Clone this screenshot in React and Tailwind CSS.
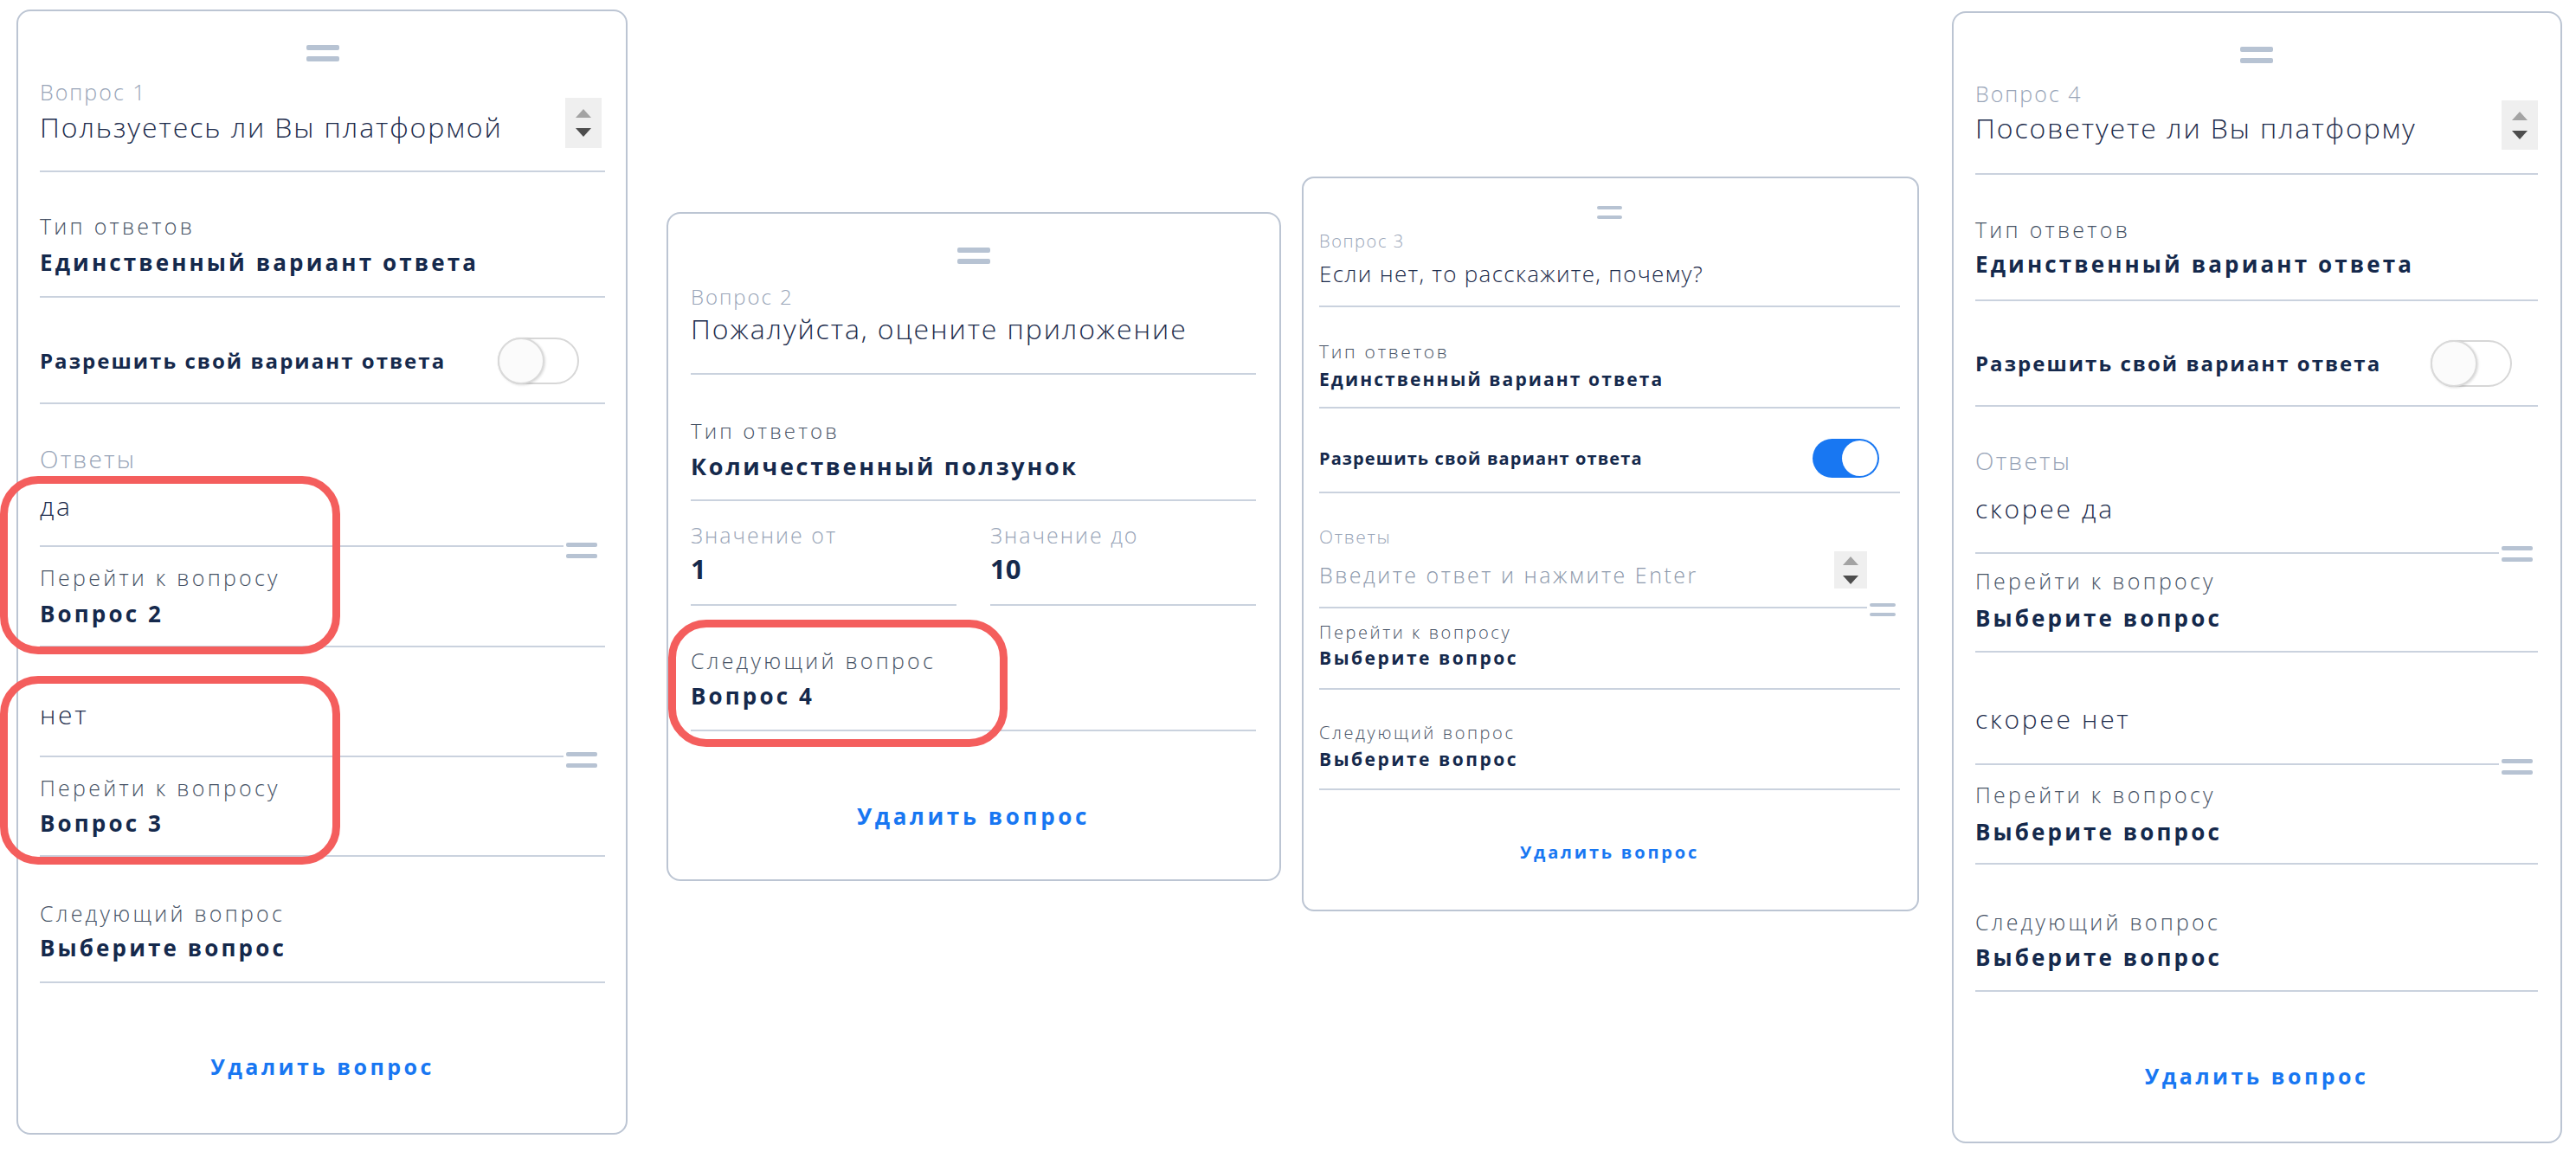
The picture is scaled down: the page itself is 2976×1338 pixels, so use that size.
import React from 'react';

/* ── small pieces ── */
function Handle({ className = '', w = 'w-[38px]', bar = 'h-[6px]', gap = 'mt-[7px]' }) {
  return (
    <div className={`${w} ${className}`}>
      <div className={`${bar} rounded-[2px] bg-[#b7c3d3]`} />
      <div className={`${bar} ${gap} rounded-[2px] bg-[#b7c3d3]`} />
    </div>
  );
}

function Line({ className = '' }) {
  return <div className={`h-[2px] bg-[#cad2de] ${className}`} />;
}

function Spinner({ className = '' }) {
  return (
    <div className={`bg-[#efefef] flex flex-col items-center justify-center gap-[12px] ${className}`}>
      <svg width="18" height="10" viewBox="0 0 18 10"><path d="M9 0 L18 10 L0 10 Z" fill="#a3a3a3" /></svg>
      <svg width="18" height="10" viewBox="0 0 18 10"><path d="M0 0 L18 0 L9 10 Z" fill="#4d4d4d" /></svg>
    </div>
  );
}

function ToggleOff({ className = '' }) {
  return (
    <div className={`relative w-[94px] h-[54px] rounded-full border-2 border-[#d7d7d7] bg-white ${className}`}>
      <div className="absolute left-[-2px] top-[-2px] w-[54px] h-[54px] rounded-full border-2 border-[#dadada] bg-[#fbfbfb] shadow-[1px_1px_3px_rgba(0,0,0,0.15)]" />
    </div>
  );
}

function ToggleOn({ className = '' }) {
  return (
    <div className={`relative w-[77px] h-[45px] rounded-full bg-[#1877f2] ${className}`}>
      <div className="absolute right-[2px] top-[2px] w-[41px] h-[41px] rounded-full bg-white" />
    </div>
  );
}

// text styles; the tracking makes up for the wider face of the original
const LIGHT = 'text-[#98a4b7] font-light tracking-[0.08em]';
const MID = 'text-[#475366] font-light tracking-[0.13em]';
const Q = 'text-[#1d2c4c] font-light tracking-[0.06em]';
const ANS = 'text-[#1d2c4c] font-light tracking-[0.09em]';
const VAL = 'text-[#15294c] font-bold tracking-[0.12em]';
const SW = 'font-bold text-[#15294c] tracking-[0.085em]';
const LINK = 'text-[#1877f2] font-bold tracking-[0.14em]';

function T({ c, children }) {
  return <div className={`leading-none whitespace-nowrap ${c}`}>{children}</div>;
}

/* ── cards ── */
function CardOne() {
  return (
    <div className="ml-[19px] mt-[11px] w-[706px] h-[1300px] shrink-0 rounded-[16px] border-2 border-[#bcc5d3] bg-white pl-[25px] pr-[24px]">
      <div className="flex justify-center"><Handle className="mt-[39px]" /></div>
      <div className="mt-[23px] flex items-start">
        <div className="flex-1">
          <T c={`text-[25px] ${LIGHT}`}>Вопрос 1</T>
          <T c={`mt-[12px] text-[32px] ${Q}`}>Пользуетесь ли Вы платформой</T>
        </div>
        <Spinner className="mt-[19px] mr-[4px] w-[42px] h-[58px]" />
      </div>
      <Line className="mt-[26px]" />
      <T c={`mt-[50px] text-[25px] ${MID}`}>Тип ответов</T>
      <T c={`mt-[16px] text-[26px] ${VAL}`}>Единственный вариант ответа</T>
      <Line className="mt-[26px]" />
      <div className="mt-[45px] h-[55px] flex items-center justify-between">
        <T c={`text-[24px] ${SW}`}>Разрешить свой вариант ответа</T>
        <ToggleOff className="mr-[30px]" />
      </div>
      <Line className="mt-[21px]" />
      <T c={`mt-[49px] text-[28px] ${LIGHT}`}>Ответы</T>

      <div className="mt-[26px] flex items-start">
        <div className="flex-1">
          <T c={`text-[30px] ${ANS}`}>да</T>
          <Line className="mt-[30px]" />
          <T c={`mt-[23px] text-[25px] ${MID}`}>Перейти к вопросу</T>
          <T c={`mt-[16px] text-[26px] ${VAL}`}>Вопрос 2</T>
        </div>
        <Handle className="mt-[57px] ml-[3px] mr-[9px]" w="w-[36px]" bar="h-[5px]" gap="mt-[8px]" />
      </div>
      <Line className="mt-[24px]" />

      <div className="mt-[63px] flex items-start">
        <div className="flex-1">
          <T c={`text-[30px] ${ANS}`}>нет</T>
          <Line className="mt-[32px]" />
          <T c={`mt-[23px] text-[25px] ${MID}`}>Перейти к вопросу</T>
          <T c={`mt-[15px] text-[26px] ${VAL}`}>Вопрос 3</T>
        </div>
        <Handle className="mt-[58px] ml-[3px] mr-[9px]" w="w-[36px]" bar="h-[5px]" gap="mt-[8px]" />
      </div>
      <Line className="mt-[24px]" />

      <T c={`mt-[53px] text-[25px] ${MID}`}>Следующий вопрос</T>
      <T c={`mt-[14px] text-[26px] ${VAL}`}>Выберите вопрос</T>
      <Line className="mt-[26px]" />
      <div className="mt-[84px] flex justify-center">
        <T c={`text-[25px] ${LINK}`}>Удалить вопрос</T>
      </div>
    </div>
  );
}

function CardTwo() {
  return (
    <div className="ml-[45px] mt-[245px] w-[710px] h-[773px] shrink-0 rounded-[16px] border-2 border-[#bcc5d3] bg-white pl-[26px] pr-[27px]">
      <div className="flex justify-center"><Handle className="mt-[39px]" /></div>
      <T c={`mt-[26px] text-[24px] ${LIGHT}`}>Вопрос 2</T>
      <T c={`mt-[9px] text-[32px] ${Q}`}>Пожалуйста, оцените приложение</T>
      <Line className="mt-[35px]" />
      <T c={`mt-[53px] text-[24px] ${MID}`}>Тип ответов</T>
      <T c="mt-[15px] text-[27px] text-[#15294c] font-bold tracking-[0.1em]">Количественный ползунок</T>
      <Line className="mt-[25px]" />
      <div className="grid grid-cols-2 gap-x-[39px]">
        <div>
          <T c={`mt-[27px] text-[25px] ${LIGHT}`}>Значение от</T>
          <T c="mt-[11px] text-[31px] font-bold text-[#15294c]">1</T>
          <Line className="mt-[25px]" />
        </div>
        <div>
          <T c={`mt-[27px] text-[25px] ${LIGHT}`}>Значение до</T>
          <T c="mt-[11px] text-[31px] font-bold text-[#15294c]">10</T>
          <Line className="mt-[25px]" />
        </div>
      </div>
      <T c={`mt-[51px] text-[25px] ${MID}`}>Следующий вопрос</T>
      <T c={`mt-[15px] text-[26px] ${VAL}`}>Вопрос 4</T>
      <Line className="mt-[26px]" />
      <div className="mt-[85px] flex justify-center">
        <T c={`text-[26px] ${LINK}`}>Удалить вопрос</T>
      </div>
    </div>
  );
}

function CardThree() {
  return (
    <div className="ml-[24px] mt-[204px] w-[713px] h-[849px] shrink-0 rounded-[14px] border-2 border-[#bcc5d3] bg-white pl-[18px] pr-[20px]">
      <div className="flex justify-center"><Handle className="mt-[32px]" w="w-[29px]" bar="h-[4px]" gap="mt-[7px]" /></div>
      <T c={`mt-[16px] text-[20px] ${LIGHT}`}>Вопрос 3</T>
      <T c="mt-[14px] text-[26px] text-[#1d2c4c] font-light tracking-[0.05em]">Если нет, то расскажите, почему?</T>
      <Line className="mt-[24px]" />
      <T c={`mt-[41px] text-[21px] ${MID}`}>Тип ответов</T>
      <T c="mt-[11px] text-[21px] text-[#15294c] font-bold tracking-[0.1em]">Единственный вариант ответа</T>
      <Line className="mt-[21px]" />
      <div className="mt-[35px] h-[45px] flex items-center justify-between">
        <T c="text-[20px] font-bold text-[#15294c] tracking-[0.055em]">Разрешить свой вариант ответа</T>
        <ToggleOn className="mr-[24px]" />
      </div>
      <Line className="mt-[16px]" />
      <T c={`mt-[40px] text-[21px] ${LIGHT}`}>Ответы</T>

      <div className="mt-[6px] flex items-start">
        <div className="flex-1">
          <div className="flex items-start">
            <T c="mt-[15px] flex-1 text-[25px] font-light text-[#8c98ab] tracking-[0.1em]">Введите ответ и нажмите Enter</T>
            <Spinner className="w-[38px] h-[43px] gap-[6px]" />
          </div>
          <Line className="mt-[21px]" />
          <T c={`mt-[18px] text-[20px] ${MID}`}>Перейти к вопросу</T>
          <T c={`mt-[9px] text-[21px] ${VAL}`}>Выберите вопрос</T>
        </div>
        <Handle className="mt-[60px] ml-[3px] mr-[5px]" w="w-[30px]" bar="h-[4px]" gap="mt-[7px]" />
      </div>
      <Line className="mt-[24px]" />

      <T c={`mt-[40px] text-[20px] ${MID}`}>Следующий вопрос</T>
      <T c={`mt-[10px] text-[21px] ${VAL}`}>Выберите вопрос</T>
      <Line className="mt-[23px]" />
      <div className="mt-[62px] flex justify-center">
        <T c={`text-[20px] ${LINK}`}>Удалить вопрос</T>
      </div>
    </div>
  );
}

function CardFour() {
  return (
    <div className="ml-[38px] mt-[13px] w-[705px] h-[1308px] shrink-0 rounded-[16px] border-2 border-[#bcc5d3] bg-white pl-[25px] pr-[26px]">
      <div className="flex justify-center"><Handle className="mt-[39px]" /></div>
      <div className="mt-[23px] flex items-start">
        <div className="flex-1">
          <T c={`text-[25px] ${LIGHT}`}>Вопрос 4</T>
          <T c={`mt-[11px] text-[32px] ${Q}`}>Посоветуете ли Вы платформу</T>
        </div>
        <Spinner className="mt-[20px] w-[42px] h-[57px]" />
      </div>
      <Line className="mt-[27px]" />
      <T c={`mt-[51px] text-[25px] ${MID}`}>Тип ответов</T>
      <T c={`mt-[14px] text-[26px] ${VAL}`}>Единственный вариант ответа</T>
      <Line className="mt-[28px]" />
      <div className="mt-[45px] h-[54px] flex items-center justify-between">
        <T c={`text-[24px] ${SW}`}>Разрешить свой вариант ответа</T>
        <ToggleOff className="mr-[30px]" />
      </div>
      <Line className="mt-[21px]" />
      <T c={`mt-[48px] text-[28px] ${LIGHT}`}>Ответы</T>

      <div className="mt-[27px] flex items-start">
        <div className="flex-1">
          <T c={`text-[30px] ${ANS}`}>скорее да</T>
          <Line className="mt-[35px]" />
          <T c={`mt-[19px] text-[25px] ${MID}`}>Перейти к вопросу</T>
          <T c={`mt-[17px] text-[26px] ${VAL}`}>Выберите вопрос</T>
        </div>
        <Handle className="mt-[58px] ml-[3px] mr-[6px]" w="w-[36px]" bar="h-[5px]" gap="mt-[8px]" />
      </div>
      <Line className="mt-[25px]" />

      <div className="mt-[62px] flex items-start">
        <div className="flex-1">
          <T c={`text-[30px] ${ANS}`}>скорее нет</T>
          <Line className="mt-[36px]" />
          <T c={`mt-[22px] text-[25px] ${MID}`}>Перейти к вопросу</T>
          <T c={`mt-[17px] text-[26px] ${VAL}`}>Выберите вопрос</T>
        </div>
        <Handle className="mt-[61px] ml-[3px] mr-[6px]" w="w-[36px]" bar="h-[5px]" gap="mt-[8px]" />
      </div>
      <Line className="mt-[23px]" />

      <T c={`mt-[54px] text-[25px] ${MID}`}>Следующий вопрос</T>
      <T c={`mt-[15px] text-[26px] ${VAL}`}>Выберите вопрос</T>
      <Line className="mt-[25px]" />
      <div className="mt-[85px] flex justify-center">
        <T c={`text-[25px] ${LINK}`}>Удалить вопрос</T>
      </div>
    </div>
  );
}

export default function App() {
  return (
    <div className="relative w-[2976px] h-[1338px] overflow-hidden bg-white font-['Open_Sans',sans-serif]">
      <div className="flex items-start">
        <CardOne />
        <CardTwo />
        <CardThree />
        <CardFour />
      </div>

      {/* red highlight annotations */}
      <div className="absolute left-0 top-[550px] w-[393px] h-[206px] rounded-[44px] border-[9px] border-[#f45e5d]" />
      <div className="absolute left-0 top-[781px] w-[393px] h-[218px] rounded-[44px] border-[9px] border-[#f45e5d]" />
      <div className="absolute left-[772px] top-[716px] w-[392px] h-[147px] rounded-[44px] border-[9px] border-[#f45e5d]" />
    </div>
  );
}
